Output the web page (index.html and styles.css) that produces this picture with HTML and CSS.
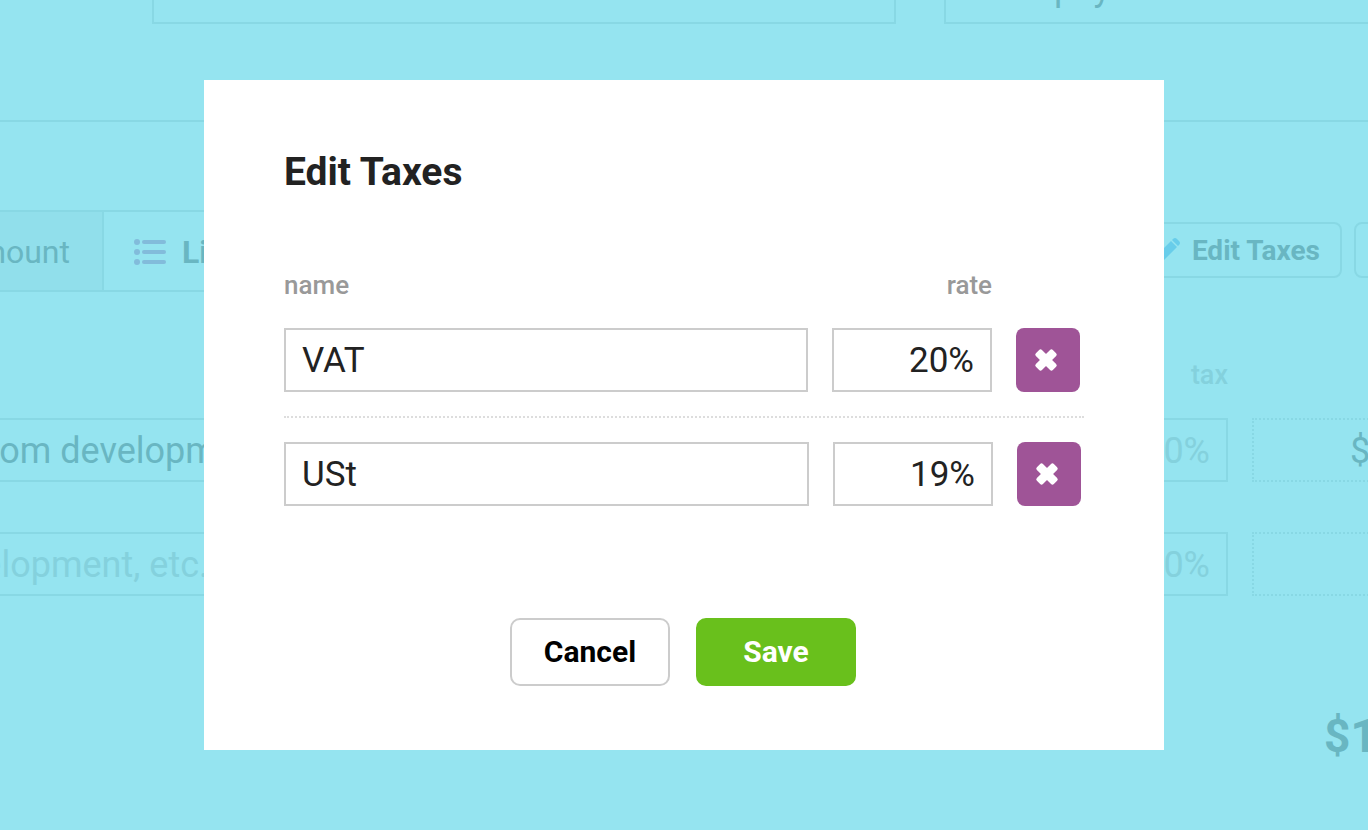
FILE: index.html
```html
<!DOCTYPE html>
<html lang="en">
<head>
<meta charset="utf-8">
<meta name="viewport" content="width=device-width, initial-scale=1">
<title>Edit Taxes</title>
<link rel="stylesheet" href="styles.css">
</head>
<body>
<main class="backdrop">
  <div class="sheet" inert>
    <div class="details">
      <input class="field" type="text" aria-label="Subject">
      <input class="field terms" type="text" aria-label="Terms" value="Auto payment on due date">
    </div>
    <div class="toolbar">
      <div class="tabs">
        <button class="tab tab-muted" type="button">Fixed amount</button>
        <button class="tab tab-current" type="button">
          <svg class="icon-list" viewBox="0 0 32 26" aria-hidden="true">
            <circle cx="3" cy="3" r="3"/><circle cx="3" cy="13" r="3"/><circle cx="3" cy="23" r="3"/>
            <rect x="8" y="1" width="24" height="4" rx="2"/><rect x="8" y="11" width="24" height="4" rx="2"/><rect x="8" y="21" width="24" height="4" rx="2"/>
          </svg>
          Line items
        </button>
      </div>
      <div class="tools">
        <button class="tool" type="button">
          <svg class="icon-pencil" viewBox="0 0 24 24" aria-hidden="true">
            <path d="M0 24l2-8L15 3l6 6L8 22zM16 2l1-1q2-2 4 0l2 2q2 2 0 4l-1 1z"/>
          </svg>
          Edit Taxes
        </button>
        <button class="tool tool-blank" type="button" aria-label="More"></button>
      </div>
    </div>
    <div class="items">
      <span class="items-head">tax</span>
      <input class="field" type="text" aria-label="Item 1" value="Custom development">
      <input class="field percent" type="text" aria-label="Item 1 tax" placeholder="0%">
      <input class="field amount" type="text" aria-label="Item 1 amount" value="$1,000.00">
      <input class="field" type="text" aria-label="Item 2" placeholder="development, etc.">
      <input class="field percent" type="text" aria-label="Item 2 tax" placeholder="0%">
      <input class="field amount" type="text" aria-label="Item 2 amount">
    </div>
    <div class="total">$1,000.00</div>
  </div>

  <form class="dialog" role="dialog" aria-labelledby="dialog-title">
    <h1 class="dialog-title" id="dialog-title">Edit Taxes</h1>
    <div class="tax-row tax-labels">
      <label for="name-1">name</label>
      <label class="rate-label" for="rate-1">rate</label>
    </div>
    <div class="tax-row">
      <input class="input" id="name-1" type="text" value="VAT">
      <input class="input rate" id="rate-1" type="text" value="20%">
      <button class="remove" type="button" aria-label="Remove VAT">
        <svg class="icon-remove" viewBox="-12 -12 24 24" aria-hidden="true"><g transform="rotate(45)"><rect x="-12" y="-4.3" width="24" height="8.6" rx="2"/><rect x="-4.3" y="-12" width="8.6" height="24" rx="2"/></g></svg>
      </button>
    </div>
    <hr class="divider">
    <div class="tax-row tax-row-last">
      <input class="input" type="text" aria-label="name" value="USt">
      <input class="input rate" type="text" aria-label="rate" value="19%">
      <button class="remove" type="button" aria-label="Remove USt">
        <svg class="icon-remove" viewBox="-12 -12 24 24" aria-hidden="true"><g transform="rotate(45)"><rect x="-12" y="-4.3" width="24" height="8.6" rx="2"/><rect x="-4.3" y="-12" width="8.6" height="24" rx="2"/></g></svg>
      </button>
    </div>
    <div class="actions">
      <button class="button" type="button">Cancel</button>
      <button class="button button-save" type="submit">Save</button>
    </div>
  </form>
</main>
</body>
</html>
```
FILE: styles.css
```css
* {
  box-sizing: border-box;
}

body {
  margin: 0;
  background: #95e4f0;
  font-family: Roboto, "Noto Sans", sans-serif;
  color: #222;
}

button,
input {
  font: inherit;
  color: inherit;
  margin: 0;
}

.backdrop {
  position: relative;
  min-height: 100vh;
  overflow: hidden;
  padding: 80px 16px;
}

/* Dimmed invoice behind the dialog */
.sheet {
  position: absolute;
  inset: -40px -160px 0 -92px;
  color: #69b6c2;
}

.field {
  width: 100%;
  min-width: 0;
  height: 64px;
  padding: 2px 16px 0;
  border: 2px solid #88d8e4;
  background: transparent;
  font-size: 36px;
}

.field::placeholder {
  color: #84d1dd;
  opacity: 1;
}

.details {
  display: grid;
  grid-template-columns: 744px 1fr;
  gap: 48px;
  padding-left: 244px;
  padding-bottom: 96px;
  border-bottom: 2px solid #88d8e4;
}

.terms {
  padding: 0 24px 8px;
}

.toolbar {
  display: flex;
  justify-content: space-between;
  align-items: flex-start;
  padding-top: 88px;
}

.tabs {
  display: flex;
  height: 82px;
  border: 2px solid #88d8e4;
}

.tab {
  display: flex;
  align-items: center;
  gap: 16px;
  padding: 2px 30px 0;
  border: 0;
  background: transparent;
  font-size: 32px;
  white-space: nowrap;
}

.tab-muted {
  width: 194px;
  justify-content: flex-end;
  padding: 2px 32px 0 0;
  border-right: 2px solid #88d8e4;
  background: #91dfeb;
}

.tab-current {
  font-weight: 700;
}

.icon-list {
  width: 32px;
  height: 26px;
  fill: #82bcdb;
}

.tools {
  display: flex;
  gap: 12px;
  padding-top: 12px;
}

.tool {
  display: flex;
  align-items: center;
  gap: 12px;
  height: 56px;
  padding: 0 20px;
  border: 2px solid #88d8e4;
  border-radius: 8px;
  background: transparent;
  font-size: 28px;
  font-weight: 700;
}

.tool-blank {
  width: 174px;
}

.icon-pencil {
  width: 24px;
  height: 24px;
  fill: #68cdea;
}

.items {
  display: grid;
  grid-template-columns: 1fr 160px 276px;
  column-gap: 24px;
  row-gap: 50px;
  padding-top: 68px;
}

.items-head {
  grid-column: 2;
  height: 32px;
  margin-bottom: -24px;
  font-size: 27px;
  font-weight: 500;
  line-height: 30px;
  text-align: right;
  color: #84d1dd;
}

.items-head + .field {
  grid-column: 1;
}

.percent {
  text-align: right;
}

.amount {
  padding-left: 96px;
  border-style: dotted;
}

.total {
  padding: 112px 0 0 1416px;
  font-size: 46px;
  font-weight: 700;
  line-height: 56px;
}

/* Dialog */
.dialog {
  position: relative;
  max-width: 960px;
  margin: 0 auto;
  padding: 68px 80px 64px;
  background: #fff;
}

.dialog-title {
  margin: 0 0 72px;
  font-size: 39px;
  font-weight: 700;
  line-height: 48px;
}

.tax-row {
  display: grid;
  grid-template-columns: 1fr 160px 64px;
  gap: 24px;
  padding-right: 4px;
}

.tax-row-last {
  padding-right: 3px;
}

.tax-labels {
  margin-bottom: 26px;
  font-size: 26px;
  font-weight: 500;
  line-height: 34px;
  color: #999;
}

.rate-label {
  text-align: right;
}

.input {
  width: 100%;
  min-width: 0;
  height: 64px;
  padding: 0 16px;
  border: 2px solid #ccc;
  border-radius: 0;
  background: #fff;
  font-size: 35px;
}

.rate {
  text-align: right;
}

.remove {
  display: grid;
  place-items: center;
  height: 64px;
  padding: 0 4px 0 0;
  border: 0;
  border-radius: 8px;
  background: #9f5497;
}

.icon-remove {
  width: 24px;
  height: 24px;
  fill: #fff;
}

.divider {
  margin: 24px 0;
  border: 0;
  border-top: 2px dotted #ddd;
}

.actions {
  display: flex;
  justify-content: center;
  gap: 26px;
  padding: 112px 2px 0 0;
}

.button {
  width: 160px;
  height: 68px;
  padding: 0 0 2px;
  border: 2px solid #ccc;
  border-radius: 10px;
  background: #fff;
  color: #000;
  font-size: 30px;
  font-weight: 700;
}

.button-save {
  border-color: #69c01c;
  background: #69c01c;
  color: #fff;
}
```
